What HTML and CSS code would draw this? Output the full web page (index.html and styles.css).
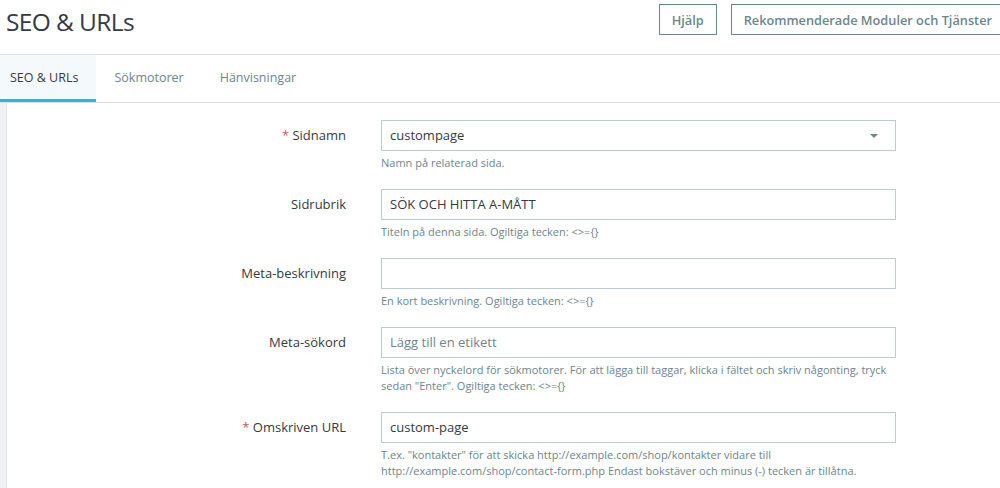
FILE: index.html
```html
<!DOCTYPE html>
<html lang="sv">
<head>
<meta charset="utf-8">
<title>SEO &amp; URLs</title>
<link rel="stylesheet" href="styles.css">
</head>
<body>
<header class="page-head">
  <h1 class="page-title">SEO &amp; URLs</h1>
  <div class="toolbar">
    <button class="btn">Hjälp</button>
    <button class="btn btn-wide">Rekommenderade Moduler och Tjänster</button>
  </div>
</header>
<nav class="tabs">
  <a class="tab tab-first active">SEO &amp; URLs</a>
  <a class="tab">Sökmotorer</a>
  <a class="tab">Hänvisningar</a>
</nav>
<main class="content">
  <div class="panel">
    <div class="row">
      <label class="label"><span class="req">*</span> Sidnamn</label>
      <div class="field">
        <div class="control select">
          <span>custompage</span>
          <span class="caret"></span>
        </div>
        <p class="help">Namn på relaterad sida.</p>
      </div>
    </div>
    <div class="row">
      <label class="label">Sidrubrik</label>
      <div class="field">
        <div class="control">SÖK OCH HITTA A-MÅTT</div>
        <p class="help">Titeln på denna sida. Ogiltiga tecken: &lt;&gt;={}</p>
      </div>
    </div>
    <div class="row">
      <label class="label">Meta-beskrivning</label>
      <div class="field">
        <div class="control"></div>
        <p class="help">En kort beskrivning. Ogiltiga tecken: &lt;&gt;={}</p>
      </div>
    </div>
    <div class="row">
      <label class="label">Meta-sökord</label>
      <div class="field">
        <div class="control placeholder">Lägg till en etikett</div>
        <p class="help">Lista över nyckelord för sökmotorer. För att lägga till taggar, klicka i fältet och skriv någonting, tryck sedan "Enter". Ogiltiga tecken: &lt;&gt;={}</p>
      </div>
    </div>
    <div class="row">
      <label class="label"><span class="req">*</span> Omskriven URL</label>
      <div class="field">
        <div class="control">custom-page</div>
        <p class="help">T.ex. "kontakter" för att skicka http://example.com/shop/kontakter vidare till http://example.com/shop/contact-form.php Endast bokstäver och minus (-) tecken är tillåtna.</p>
      </div>
    </div>
  </div>
</main>
</body>
</html>
```
FILE: styles.css
```css
* { box-sizing: border-box; }
html, body { margin: 0; padding: 0; }
body {
  font-family: "Open Sans", "Liberation Sans", sans-serif;
  color: #363a41;
  background: #eff1f2;
  width: 1000px;
  height: 488px;
  overflow: hidden;
}
.page-head {
  background: #fff;
  height: 55px;
  border-bottom: 1px solid #dfdfdf;
  display: flex;
  justify-content: space-between;
  align-items: flex-start;
  padding-left: 6px;
}
.page-title {
  margin: 0;
  font-weight: 400;
  font-size: 24.5px;
  letter-spacing: -0.6px;
  line-height: 43px;
  color: #363a41;
}
.toolbar {
  display: flex;
  gap: 14px;
  padding-top: 4px;
  margin-right: -5px;
}
.btn {
  font-family: inherit;
  font-size: 12.75px;
  font-weight: 600;
  color: #6c868e;
  background: #fff;
  border: 1px solid #6c868e;
  border-radius: 0;
  height: 31px;
  padding: 0 12px;
  white-space: nowrap;
}
.tabs {
  background: #fff;
  display: flex;
  height: 48px;
  border-bottom: 1px solid #dfdfdf;
}
.tab {
  display: flex;
  align-items: center;
  padding: 0 18px;
  font-size: 12.5px;
  color: #6c868e;
  border-bottom: 3px solid transparent;
}
.tab-first { padding-left: 10px; }
.tab.active {
  color: #363a41;
  background: #f4f9fb;
  border-bottom-color: #25b9d7;
}
.content {
  padding-left: 6px;
}
.panel {
  background: #fff;
  border-left: 1px solid #dbe6e9;
  height: 400px;
  padding-top: 17px;
}
.row {
  display: flex;
  gap: 35px;
  margin-bottom: 18px;
}
.label {
  width: 339px;
  flex: none;
  text-align: right;
  font-size: 13px;
  line-height: 31px;
  height: 31px;
  color: #363a41;
}
.req { color: #c05c67; }
.field { width: 515px; flex: none; }
.control {
  height: 31px;
  border: 1px solid #bbcdd2;
  font-size: 13px;
  line-height: 29px;
  padding: 0 8px;
  color: #363a41;
}
.select {
  display: flex;
  justify-content: space-between;
  align-items: center;
  padding-right: 17px;
}
.caret {
  width: 0;
  height: 0;
  border-left: 4px solid transparent;
  border-right: 4px solid transparent;
  border-top: 4px solid #6c868e;
}
.placeholder { color: #6c868e; }
.help {
  margin: 4px 0 0;
  font-size: 11px;
  line-height: 16px;
  color: #6c868e;
}
```
